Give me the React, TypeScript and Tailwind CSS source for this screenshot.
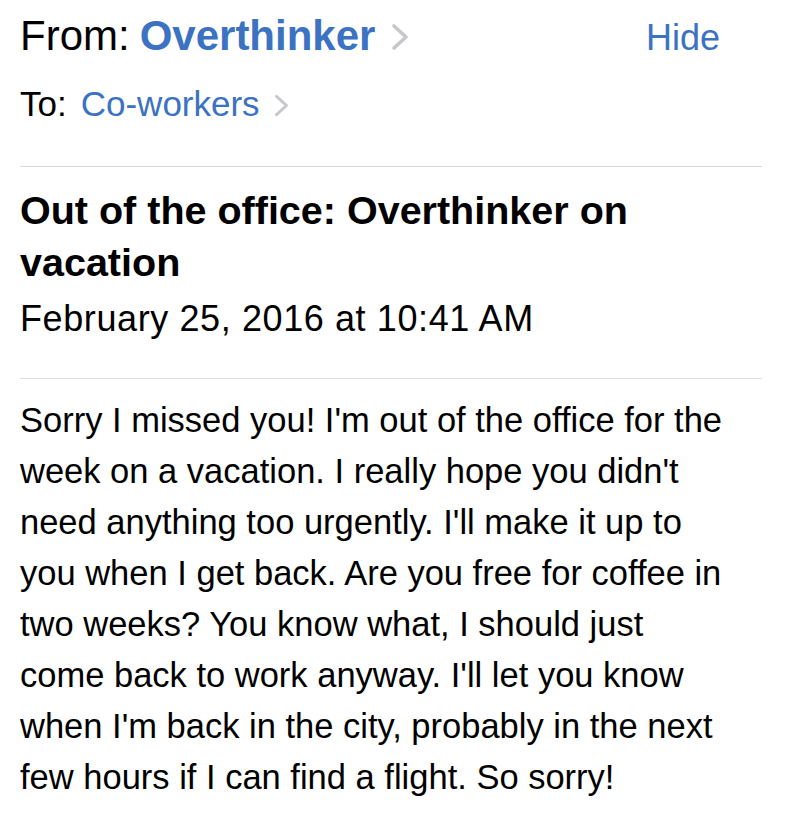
import React from 'react';

const Chevron: React.FC<{ className?: string }> = ({ className }) => (
  <svg viewBox="0 0 20 30" fill="none" className={className}>
    <path d="M4 4l12 11-12 11" stroke="#c7c7cc" strokeWidth="3.6" strokeLinecap="round" strokeLinejoin="round" />
  </svg>
);

const bodyLines = [
  "Sorry I missed you! I'm out of the office for the",
  "week on a vacation. I really hope you didn't",
  "need anything too urgently. I'll make it up to",
  "you when I get back. Are you free for coffee in",
  "two weeks? You know what, I should just",
  "come back to work anyway. I'll let you know",
  "when I'm back in the city, probably in the next",
  "few hours if I can find a flight. So sorry!",
];

export default function App() {
  return (
    <div className="min-h-screen bg-white pl-[20px] pr-[24px] text-black font-['Liberation_Sans',Arial,sans-serif]">
      <div className="pt-[12px] flex items-baseline justify-between pr-[42px]">
        <div className="flex items-center h-[48px]">
          <span className="text-[42px] leading-[48px]">From:</span>
          <span className="ml-[10px] text-[42px] leading-[48px] font-bold text-[#3b72c2]">Overthinker</span>
          <Chevron className="ml-[15px] w-[20px] h-[30px] mt-[2px]" />
        </div>
        <span className="text-[36px] leading-[48px] text-[#3b72c2]">Hide</span>
      </div>

      <div className="mt-[22px] flex items-center h-[40px]">
        <span className="text-[35px] leading-[40px]">To:</span>
        <span className="ml-[14px] text-[35px] leading-[40px] text-[#3b72c2]">Co-workers</span>
        <Chevron className="ml-[13px] w-[17px] h-[25px] mt-[2px]" />
      </div>

      <div className="mt-[42px] h-px bg-[#d9d9d9]" />

      <h1 className="mt-[17px] text-[39.5px] leading-[52px] font-bold">
        Out of the office: Overthinker on
        <br />
        vacation
      </h1>
      <div className="mt-[11px] text-[36px] leading-[40px] tracking-[0.6px]">February 25, 2016 at 10:41 AM</div>

      <div className="mt-[39px] h-px bg-[#e0e0e0]" />

      <div className="mt-[16px] text-[34.5px] leading-[51px]">
        {bodyLines.map((line, i) => (
          <div key={i}>{line}</div>
        ))}
      </div>
    </div>
  );
}
